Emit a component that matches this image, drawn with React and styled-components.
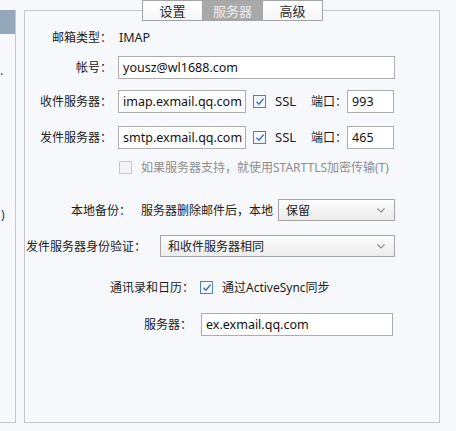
import React from 'react'
import styled, { createGlobalStyle } from 'styled-components'

const GlobalStyle = createGlobalStyle`
  html, body {
    margin: 0;
    background: #f7f8fc;
  }
  body {
    font-family: "Noto Sans", "Noto Sans CJK SC", sans-serif;
    font-size: 12px;
    color: #1b1b1b;
  }
`

const Page = styled.div`
  display: flex;
  align-items: flex-start;
  gap: 8px;
  padding-top: 10px;
  height: 431px;
  box-sizing: border-box;
`

const Sidebar = styled.div`
  width: 15px;
  height: 412px;
  border-right: 1px solid #c6c6c6;
  border-bottom: 1px solid #c6c6c6;
  overflow: hidden;
  display: flex;
  flex-direction: column;
`

const SideItem = styled.div`
  height: 24px;
  flex: none;
  display: flex;
  align-items: center;
  justify-content: flex-start;
  padding-left: ${({ $pad }) => $pad || 0}px;
  white-space: nowrap;
  color: #1c2f6e;
  background: ${({ $active }) => ($active ? '#93a6ba' : 'transparent')};
`

const Panel = styled.div`
  width: 414px;
  height: 411px;
  border: 1px solid #c6c6c6;
  display: flex;
  flex-direction: column;
`

const Tabs = styled.div`
  display: flex;
  justify-content: center;
  margin-top: -11px;
  padding-left: 2px;
`

const Tab = styled.div`
  width: 59px;
  height: 19px;
  border: 1px solid #a3a3a3;
  margin-left: -1px;
  display: flex;
  align-items: center;
  justify-content: center;
  font-size: 13px;
  color: ${({ $active }) => ($active ? '#ededed' : '#2a2a2a')};
  background: ${({ $active }) => ($active ? '#a9a9a9' : 'linear-gradient(#ffffff, #f6f6f6)')};
`

const Form = styled.div`
  display: flex;
  flex-direction: column;
`

const Row = styled.div`
  display: flex;
  align-items: center;
  height: 24px;
  margin-top: ${({ $top }) => $top}px;
  padding-left: ${({ $indent }) => $indent || 0}px;
`

const Label = styled.div`
  width: ${({ $w }) => ($w ? `${$w}px` : 'auto')};
  flex: none;
  text-align: right;
  white-space: nowrap;
  margin-right: ${({ $gap }) => $gap ?? 6}px;
`

const Value = styled.div`
  font-size: 12.5px;
  margin-left: 1px;
`

const Input = styled.div`
  width: ${({ $w }) => $w}px;
  flex: none;
  height: 21px;
  border: 1px solid #acacac;
  background: #fff;
  box-sizing: content-box;
  display: flex;
  align-items: center;
  padding-left: 4px;
  overflow: hidden;
  white-space: nowrap;
  font-size: 12.5px;
  color: #111;
`

const Check = styled.div`
  width: 11px;
  height: 11px;
  border: 1px solid ${({ $disabled }) => ($disabled ? '#c9c9c9' : '#4f7fbf')};
  background: ${({ $disabled }) => ($disabled ? '#f3f3f3' : '#f4f8fd')};
  display: flex;
  align-items: center;
  justify-content: center;
  margin-left: ${({ $left }) => $left || 0}px;
  margin-right: ${({ $gap }) => $gap}px;
  flex: none;
`

const CheckText = styled.div`
  color: ${({ $disabled }) => ($disabled ? '#8e8e8e' : '#1b1b1b')};
  white-space: nowrap;
`

const Plain = styled.div`
  white-space: nowrap;
  flex: none;
  margin-right: ${({ $gap }) => $gap}px;
  font-size: ${({ $size }) => $size || 12}px;
`

const Select = styled.div`
  width: ${({ $w }) => $w}px;
  flex: none;
  height: 20px;
  border: 1px solid #a4a4a4;
  background: linear-gradient(#fdfdfd, #ececec);
  display: flex;
  align-items: center;
  justify-content: space-between;
  padding: 0 9px 0 7px;
  font-size: 12px;
`

const Tick = () => (
  <svg width="10" height="9" viewBox="0 0 10 9">
    <path d="M1.5 4.8 L4 7.2 L8.6 1.6" fill="none" stroke="#3f6fb3" strokeWidth="1.4" />
  </svg>
)

const Chevron = () => (
  <svg width="8" height="5" viewBox="0 0 8 5">
    <path d="M0.5 0.5 L4 4 L7.5 0.5" fill="none" stroke="#8a8a8a" strokeWidth="1.1" />
  </svg>
)

const ServerRow = ({ label, host, port, top }) => (
  <Row $top={top}>
    <Label $w={87}>{label}</Label>
    <Input $w={122}>{host}</Input>
    <Check $left={7} $gap={9}><Tick /></Check>
    <Plain $gap={15} $size={13}>SSL</Plain>
    <Plain $gap={0}>端口：</Plain>
    <Input $w={41}>{port}</Input>
  </Row>
)

const App = () => (
  <>
    <GlobalStyle />
    <Page>
      <Sidebar>
        <SideItem $active />
        <SideItem />
        <SideItem>.</SideItem>
        <SideItem />
        <SideItem />
        <SideItem />
        <SideItem />
        <SideItem />
        <SideItem $pad={1}>)</SideItem>
      </Sidebar>
      <Panel>
        <Tabs>
          <Tab>设置</Tab>
          <Tab $active>服务器</Tab>
          <Tab>高级</Tab>
        </Tabs>
        <Form>
          <Row $top={4}>
            <Label $w={87}>邮箱类型：</Label>
            <Value>IMAP</Value>
          </Row>
          <Row $top={6}>
            <Label $w={87}>帐号：</Label>
            <Input $w={271}>yousz@wl1688.com</Input>
          </Row>
          <ServerRow top={10} label="收件服务器：" host="imap.exmail.qq.com" port="993" />
          <ServerRow top={12} label="发件服务器：" host="smtp.exmail.qq.com" port="465" />
          <Row $top={6} $indent={94}>
            <Check $disabled $gap={9} />
            <CheckText $disabled>如果服务器支持，就使用STARTTLS加密传输(T)</CheckText>
          </Row>
          <Row $top={19} $indent={46}>
            <Label $gap={10}>本地备份：</Label>
            <Plain $gap={5}>服务器删除邮件后，本地</Plain>
            <Select $w={99}>保留<Chevron /></Select>
          </Row>
          <Row $top={12} $indent={1}>
            <Label $gap={14}>发件服务器身份验证：</Label>
            <Select $w={217}>和收件服务器相同<Chevron /></Select>
          </Row>
          <Row $top={17} $indent={85}>
            <Label $gap={6}>通讯录和日历：</Label>
            <Check $gap={9}><Tick /></Check>
            <CheckText>通过ActiveSync同步</CheckText>
          </Row>
          <Row $top={13} $indent={119}>
            <Label $gap={9}>服务器：</Label>
            <Input $w={186}>ex.exmail.qq.com</Input>
          </Row>
        </Form>
      </Panel>
    </Page>
  </>
)

export default App
